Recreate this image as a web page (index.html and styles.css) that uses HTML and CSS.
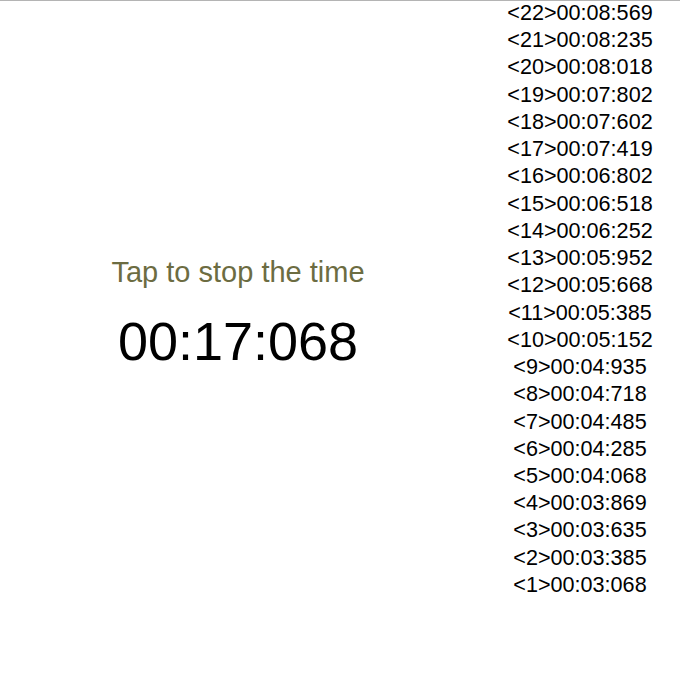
FILE: index.html
```html
<!DOCTYPE html>
<html lang="en">
<head>
<meta charset="UTF-8" />
<meta name="viewport" content="width=device-width, initial-scale=1.0"/>
<title>Stopwatch</title>
<link rel="stylesheet" href="styles.css">
</head>
<body>
<div class="app">
  <div class="stage" id="stage">
    <div class="hint">Tap to stop the time</div>
    <div class="clock" id="clock">00:17:068</div>
  </div>
  <ul class="laps" id="laps">
    <li>&lt;22&gt;00:08:569</li>
    <li>&lt;21&gt;00:08:235</li>
    <li>&lt;20&gt;00:08:018</li>
    <li>&lt;19&gt;00:07:802</li>
    <li>&lt;18&gt;00:07:602</li>
    <li>&lt;17&gt;00:07:419</li>
    <li>&lt;16&gt;00:06:802</li>
    <li>&lt;15&gt;00:06:518</li>
    <li>&lt;14&gt;00:06:252</li>
    <li>&lt;13&gt;00:05:952</li>
    <li>&lt;12&gt;00:05:668</li>
    <li>&lt;11&gt;00:05:385</li>
    <li>&lt;10&gt;00:05:152</li>
    <li>&lt;9&gt;00:04:935</li>
    <li>&lt;8&gt;00:04:718</li>
    <li>&lt;7&gt;00:04:485</li>
    <li>&lt;6&gt;00:04:285</li>
    <li>&lt;5&gt;00:04:068</li>
    <li>&lt;4&gt;00:03:869</li>
    <li>&lt;3&gt;00:03:635</li>
    <li>&lt;2&gt;00:03:385</li>
    <li>&lt;1&gt;00:03:068</li>
  </ul>
</div>
</body>
</html>
```

FILE: styles.css
```css
:root {
  --text-color: #000000;
  --hint-color: #6c6c42;
  --rule-color: #b4b4b4;
  --font-family: 'Liberation Sans', Arial, sans-serif;
}

html, body {
  margin: 0;
  padding: 0;
  height: 100%;
}

body {
  background: #fff;
  color: var(--text-color);
  font-family: var(--font-family);
  border-top: 1px solid var(--rule-color);
  box-sizing: border-box;
}

.app {
  display: flex;
  height: 100%;
}

.stage {
  width: 476px;
  display: flex;
  flex-direction: column;
  align-items: center;
  padding-top: 254px;
  box-sizing: border-box;
  user-select: none;
}

.hint {
  color: var(--hint-color);
  font-size: 29px;
  line-height: 34px;
}

.clock {
  font-size: 54px;
  line-height: 62px;
  margin-top: 21px;
}

.laps {
  flex: 1;
  list-style: none;
  margin: -2px 0 0;
  padding: 0 0 0 4px;
  text-align: center;
  font-size: 21.6px;
  line-height: 27.24px;
}
```
